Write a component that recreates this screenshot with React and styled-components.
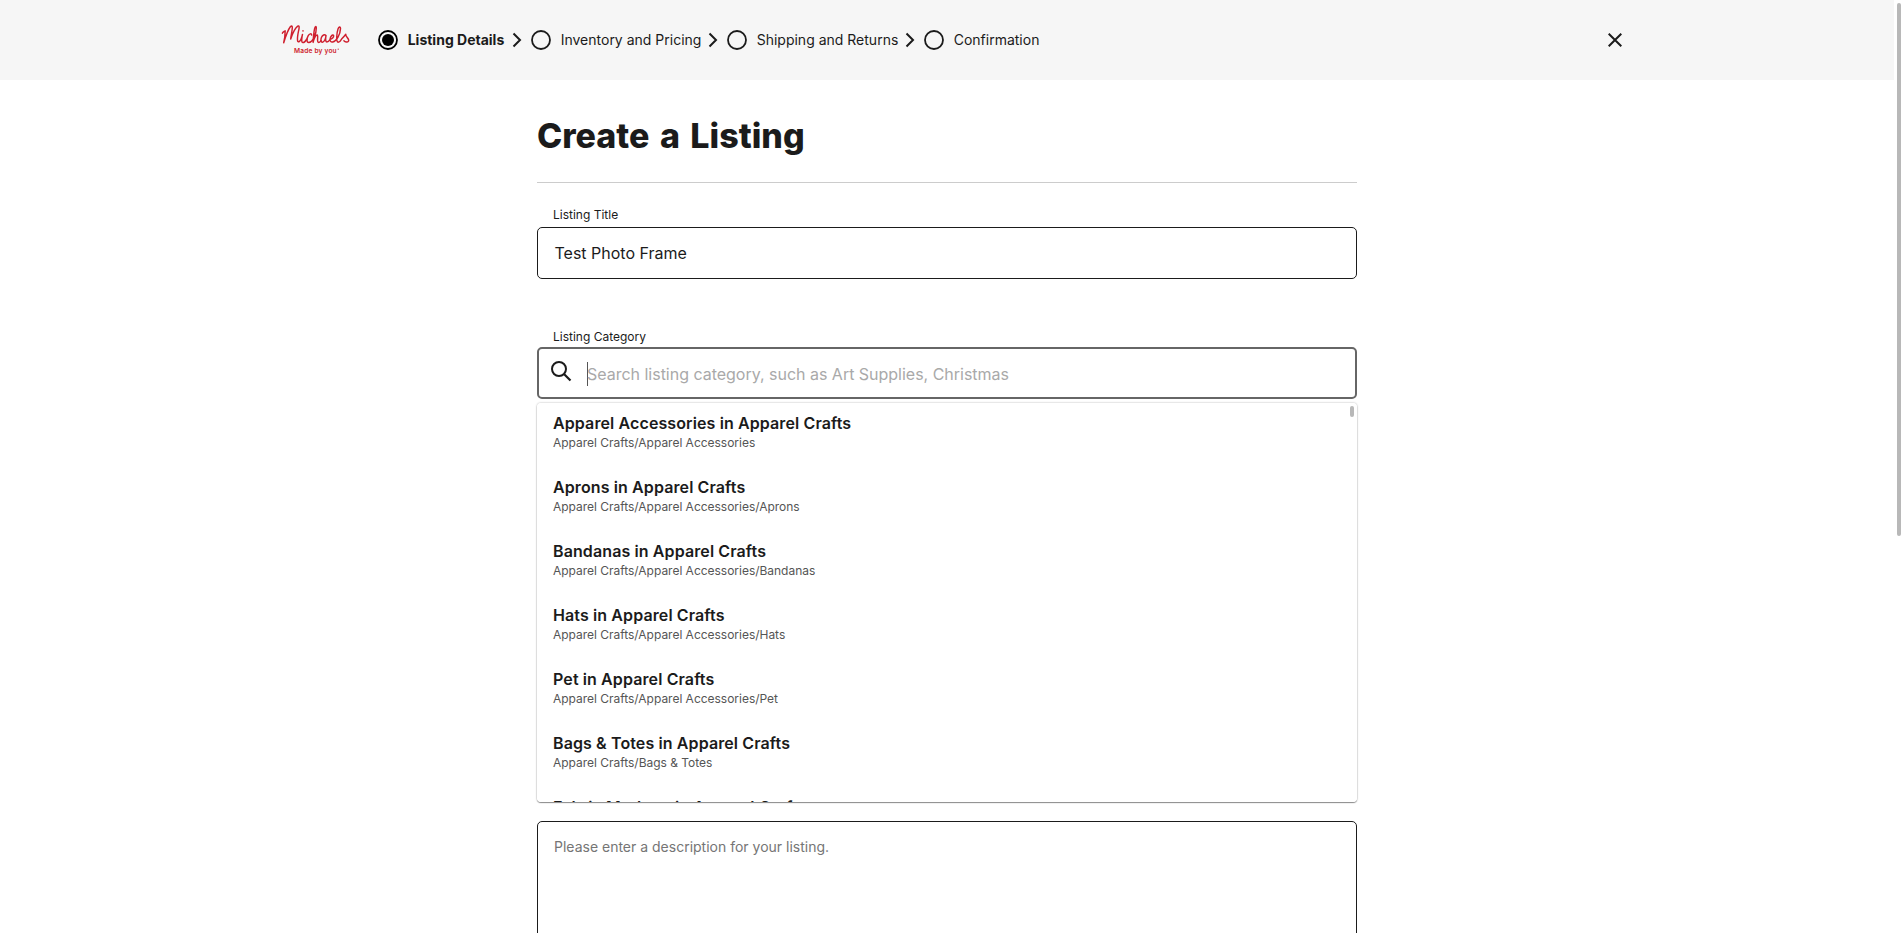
import React from "react";
import styled, { createGlobalStyle } from "styled-components";

const GlobalStyle = createGlobalStyle`
  * { box-sizing: border-box; }
  html, body { margin: 0; height: 100%; overflow: hidden; background: #fff; }
  body { font-family: Inter, "Liberation Sans", sans-serif; color: #1b1b1b; }
`;

const Page = styled.div`
  display: flex;
  height: 933px;
  overflow: hidden;
`;

const Content = styled.div`
  width: 1894px;
  flex: none;
`;

const ScrollTrack = styled.div`
  width: 10px;
  padding: 3px 0 0 3px;
`;

const ScrollThumb = styled.div`
  width: 4px;
  height: 533px;
  border-radius: 2px;
  background: #b8b8b8;
`;

const Header = styled.header`
  height: 80px;
  padding: 0 272px 0 280px;
  display: flex;
  align-items: center;
  background: #f6f6f6;
`;

const Logo = styled.svg`
  width: 72px;
  height: 36px;
  margin-right: 26px;
  flex: none;
`;

const Steps = styled.nav`
  display: flex;
  align-items: center;
  flex: 1;
`;

const Step = styled.div`
  display: flex;
  align-items: center;
  width: ${(p) => p.$width}px;
  font-size: 14px;
  line-height: 20px;
  font-weight: ${(p) => (p.$active ? 700 : 400)};
  white-space: nowrap;
`;

const Radio = styled.svg`
  width: 20px;
  height: 20px;
  margin-right: 9.7px;
  flex: none;
`;

const Arrow = styled.svg`
  width: 10px;
  height: 16px;
  margin-left: auto;
  margin-right: 9px;
`;

const CloseButton = styled.button`
  width: 14px;
  height: 14px;
  padding: 0;
  border: 0;
  background: none;
  display: flex;
`;

const Main = styled.main`
  width: 820px;
  margin-left: 537px;
`;

const Title = styled.h1`
  margin: 0;
  padding-top: 32px;
  height: 103px;
  border-bottom: 1px solid #ccc;
  font-size: 34px;
  line-height: 48px;
  font-weight: 800;
  word-spacing: 3px;
  white-space: nowrap;
`;

const Field = styled.div`
  position: relative;
  margin-top: ${(p) => p.$gap}px;
`;

const Label = styled.label`
  display: block;
  height: ${(p) => p.$height}px;
  padding-left: 16px;
  font-size: 12px;
  line-height: 16px;
`;

const InputBox = styled.div`
  display: flex;
  align-items: center;
  height: 52px;
  padding-left: ${(p) => (p.$focused ? 12 : 16.5)}px;
  border: ${(p) => (p.$focused ? "2px solid #666" : "1px solid #1b1b1b")};
  border-radius: 5px;
  font-size: 16px;
  line-height: 24px;
`;

const SearchIcon = styled.svg`
  width: 22px;
  height: 22px;
  margin: -4px 15px 0 -1px;
`;

const Placeholder = styled.span`
  margin-top: 2px;
  box-shadow: inset 1px 0 0 #555;
  color: #a9a9a9;
  letter-spacing: -0.015px;
`;

const Dropdown = styled.div`
  position: absolute;
  top: 74px;
  left: 0;
  width: 820px;
  height: 399px;
  overflow: hidden;
  display: flex;
  justify-content: space-between;
  border-radius: 4px;
  background: #fff;
`;

const DropdownShade = styled.div`
  position: absolute;
  top: 74px;
  left: 0;
  width: 820px;
  height: 399px;
  border-radius: 4px;
  box-shadow: 0 1px 1px rgba(0, 0, 0, 0.4), 0 0 2px rgba(0, 0, 0, 0.35);
`;

const OptionList = styled.ul`
  list-style: none;
  margin: 0;
  padding: 8px 0 0 16px;
`;

const Option = styled.li`
  height: 64px;
  white-space: nowrap;
`;

const OptionName = styled.div`
  font-size: 16px;
  line-height: 24px;
  font-weight: 600;
  letter-spacing: 0.11px;
`;

const OptionPath = styled.div`
  font-size: 12px;
  line-height: 16px;
  letter-spacing: -0.02px;
  color: #555;
`;

const ListThumb = styled.div`
  width: 4px;
  height: 11px;
  margin: 3px 3px 0 0;
  border-radius: 2px;
  background: #b8b8b8;
`;

const Description = styled.div`
  height: 160px;
  margin-top: 422px;
  padding: 15px 16px;
  border: 1px solid #1b1b1b;
  border-radius: 5px;
  font-size: 14px;
  line-height: 20px;
  color: #757575;
`;

const steps = [
  { name: "Listing Details", width: 153, active: true },
  { name: "Inventory and Pricing", width: 196 },
  { name: "Shipping and Returns", width: 197 },
  { name: "Confirmation", width: 115 },
];

const options = [
  ["Apparel Accessories in Apparel Crafts", "Apparel Crafts/Apparel Accessories"],
  ["Aprons in Apparel Crafts", "Apparel Crafts/Apparel Accessories/Aprons"],
  ["Bandanas in Apparel Crafts", "Apparel Crafts/Apparel Accessories/Bandanas"],
  ["Hats in Apparel Crafts", "Apparel Crafts/Apparel Accessories/Hats"],
  ["Pet in Apparel Crafts", "Apparel Crafts/Apparel Accessories/Pet"],
  ["Bags & Totes in Apparel Crafts", "Apparel Crafts/Bags & Totes"],
  ["Fabric Markers in Apparel Crafts"],
];

function BrandLogo() {
  return (
    <Logo viewBox="0 0 72 36" aria-label="Michaels">
      <g fill="none" stroke="#cf1f2e" strokeWidth="1.45" strokeLinecap="round" strokeLinejoin="round">
        <path d="M2.4 11.2c.2-1 1.500-1.600 2.800-2.400C5.100 13 4.600 17.500 3.700 20.800C5.600 14.500 8.200 7.500 10.500 4.500c1.700-1.500 2 .2 1.700 2.500c-.3 3.500-1.300 7-1.500 10C12.500 11.500 15.200 6 17.700 4.100c1.700-.8 1.600 1.200 1.200 3.200c-.7 3.500-1.900 8-1.300 11.500c.3 1.900 2.300 1.100 3.400-1.500c.8-1.900 1.300-3.500 1.500-4.900c-.7 3-1.500 8.200.4 8.200c1.800-.1 3-2 4-3.600" />
        <path d="M31.600 13.100c.2-2-2.200-1.500-3.500.8c-1.500 2.700-1.600 6.500.6 6.600c4.300.1 7.700-9.500 7.600-14.500c0-2.200-1.200-1.600-1.700.6c-.9 4-1.300 9.500-1.500 13.800c.7-3.500 2.500-7.500 4-7.500c1.700.3-.8 6.700 1.300 7.500c1 .2 2-.8 2.600-1.900" />
        <path d="M45.600 13.500c-.8-1.500-3.100-.5-4.100 1.800c-1.300 3-.4 5.300 1.300 4.800c1.800-.7 2.900-4 3.200-6.600c-.6 3.200-.6 6.300.8 6.500c1.400 0 2.500-1.300 3.300-2.600c1.700-.3 4-2.200 3.500-4c-.8-1.400-3.200.9-3.500 3.400c-.3 2.300.8 3.600 2.600 3.200c4-.9 7.600-7.700 7.800-13.400c0-2.500-1.700-2-2.500.4c-1.100 3.300-2.300 13 .2 13.200c1.500 0 2.600-1.600 3.400-3.100c1.500-1.600 3-3.200 4.200-4.800c-.8 2.200 4.100 4.700 2.700 6.900c-1 1.400-3.400 1-4.600-.4" />
        <path d="M23 8.700v.3" />
      </g>
      <text x="14.100" y="31.300" textLength="42.500" fontFamily="Inter, sans-serif" fontSize="6.600" fontWeight="600" fill="#cf1f2e">Made by you</text>
      <circle cx="58.200" cy="27.200" r=".6" fill="#cf1f2e" />
    </Logo>
  );
}

export default function App() {
  return (
    <>
      <GlobalStyle />
      <Page>
        <Content>
          <Header>
            <BrandLogo />
            <Steps>
              {steps.map((s, i) => (
                <Step key={s.name} $width={s.width} $active={s.active}>
                  <Radio viewBox="0 0 20 20">
                    <circle cx="10" cy="10" r="9" fill="none" stroke={s.active ? "#000" : "#1b1b1b"} strokeWidth="1.800" />
                    {s.active && <circle cx="10" cy="10" r="6" fill="#000" />}
                  </Radio>
                  {s.name}
                  {i < steps.length - 1 && (
                    <Arrow viewBox="0 0 10 16">
                      <path d="M1.500 1.500L8 8L1.500 14.500" fill="none" stroke="#1b1b1b" strokeWidth="2" />
                    </Arrow>
                  )}
                </Step>
              ))}
            </Steps>
            <CloseButton aria-label="Close">
              <svg width="14" height="14" viewBox="0 0 14 14">
                <path d="M.7.7L13.300 13.300M13.300.7L.7 13.300" stroke="#1b1b1b" strokeWidth="2" />
              </svg>
            </CloseButton>
          </Header>
          <Main>
            <Title>Create a Listing</Title>
            <Field $gap={24}>
              <Label $height={20}>Listing Title</Label>
              <InputBox>Test Photo Frame</InputBox>
            </Field>
            <Field $gap={50}>
              <Label $height={18}>Listing Category</Label>
              <InputBox $focused>
                <SearchIcon viewBox="0 0 22 22">
                  <circle cx="9" cy="9" r="7" fill="none" stroke="#1b1b1b" strokeWidth="2" />
                  <path d="M14 14L20.500 20.500" stroke="#1b1b1b" strokeWidth="2.200" />
                </SearchIcon>
                <Placeholder>Search listing category, such as Art Supplies, Christmas</Placeholder>
              </InputBox>
              <DropdownShade />
              <Dropdown>
                <OptionList>
                  {options.map(([name, path]) => (
                    <Option key={name}>
                      <OptionName>{name}</OptionName>
                      {path && <OptionPath>{path}</OptionPath>}
                    </Option>
                  ))}
                </OptionList>
                <ListThumb />
              </Dropdown>
            </Field>
            <Description>Please enter a description for your listing.</Description>
          </Main>
        </Content>
        <ScrollTrack>
          <ScrollThumb />
        </ScrollTrack>
      </Page>
    </>
  );
}
